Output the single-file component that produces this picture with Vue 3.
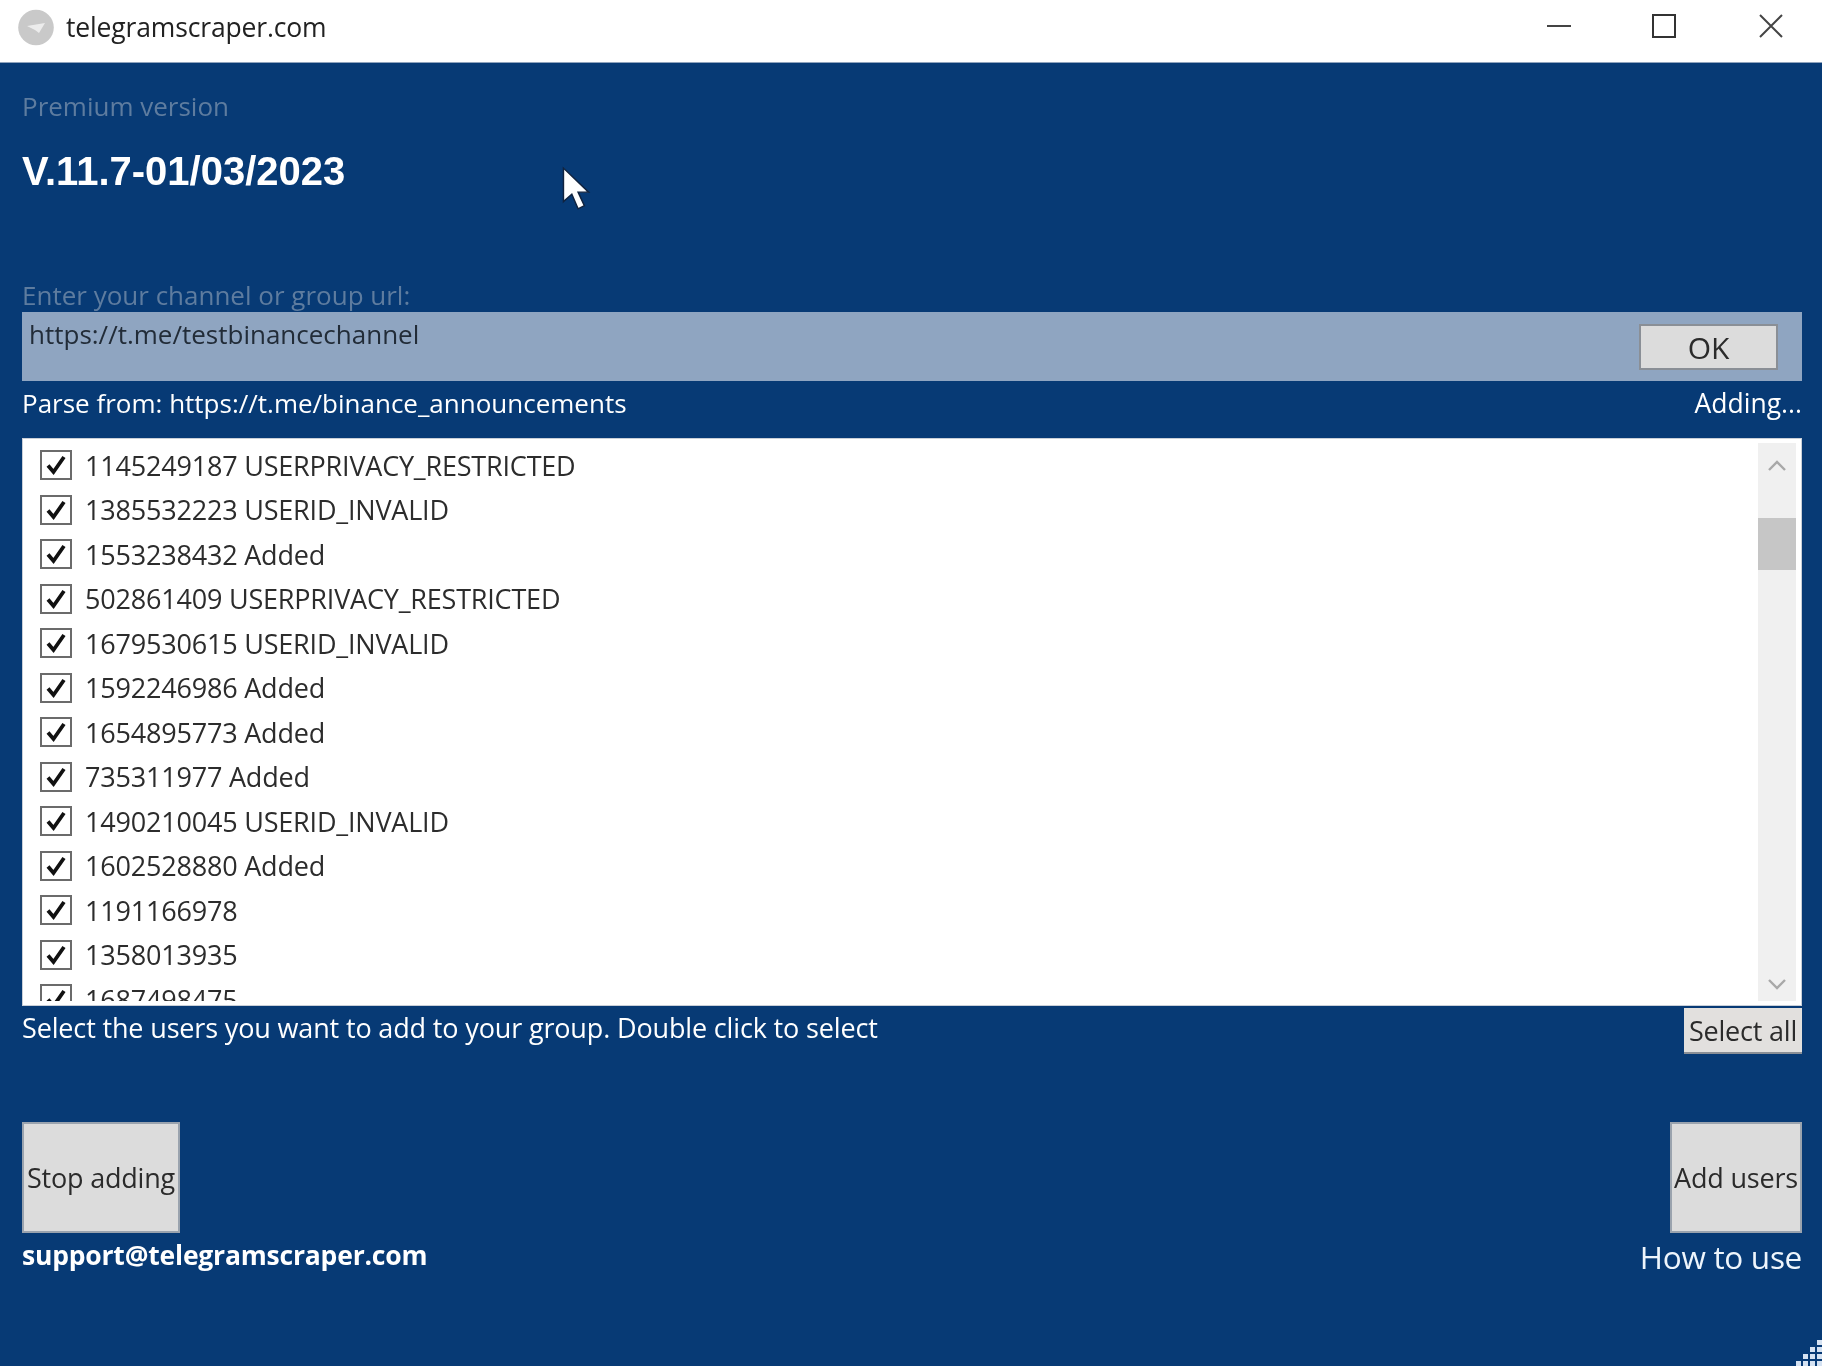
<script setup>
const rows = [
  '1145249187 USERPRIVACY_RESTRICTED',
  '1385532223 USERID_INVALID',
  '1553238432 Added',
  '502861409 USERPRIVACY_RESTRICTED',
  '1679530615 USERID_INVALID',
  '1592246986 Added',
  '1654895773 Added',
  '735311977 Added',
  '1490210045 USERID_INVALID',
  '1602528880 Added',
  '1191166978',
  '1358013935',
  '1687498475',
]
const grip = [[28,0],[28,7],[21,7],[28,14],[21,14],[14,14],[28,21],[21,21],[14,21],[7,21]]
</script>

<template>
  <div class="window">
    <header class="titlebar">
      <div class="title">
        <svg class="logo" width="36" height="37" viewBox="0 0 36 37">
          <circle cx="18" cy="18.5" r="17.8" fill="#c9c9c9" />
          <path d="M9 17 L27 14 L21 24 L17 21 Z" fill="#ececec" />
        </svg>
        <span>telegramscraper.com</span>
      </div>
      <div class="controls">
        <svg width="26" height="4" viewBox="0 0 26 4"><path d="M1 2H25" stroke="#444" stroke-width="2" /></svg>
        <svg class="max" width="26" height="26" viewBox="0 0 26 26"><rect x="2" y="2" width="22" height="22" fill="none" stroke="#333" stroke-width="2" /></svg>
        <svg width="26" height="26" viewBox="0 0 26 26"><path d="M2 2L24 24M24 2L2 24" stroke="#444" stroke-width="2" /></svg>
      </div>
    </header>

    <main class="body">
      <p class="muted premium">Premium version</p>
      <h1 class="version">V.11.7-01/03/2023</h1>
      <p class="muted enter">Enter your channel or group url:</p>

      <div class="urlbox">
        <span class="url">https://t.me/testbinancechannel</span>
        <button class="btn ok">OK</button>
      </div>

      <div class="status">
        <span>Parse from: https://t.me/binance_announcements</span>
        <span class="adding">Adding...</span>
      </div>

      <section class="listbox">
        <ul class="rows">
          <li v-for="row in rows" :key="row" class="row">
            <svg class="check" width="32" height="30" viewBox="0 0 32 30">
              <rect x="1" y="1" width="30" height="28" fill="#fff" stroke="#6b6b6b" stroke-width="2" />
              <path d="M8 15.5L13.5 22L24 7" fill="none" stroke="#111" stroke-width="3.8" />
            </svg>
            <span>{{ row }}</span>
          </li>
        </ul>
        <div class="scrollbar">
          <svg class="arrow" width="20" height="12" viewBox="0 0 20 12"><path d="M2 10L10 2L18 10" fill="none" stroke="#a8a8a8" stroke-width="2.4" /></svg>
          <div class="thumb"></div>
          <svg class="arrow down" width="20" height="12" viewBox="0 0 20 12"><path d="M2 2L10 10L18 2" fill="none" stroke="#a8a8a8" stroke-width="2.4" /></svg>
        </div>
      </section>

      <div class="hint">
        <span>Select the users you want to add to your group. Double click to select</span>
        <button class="btn selectall">Select all</button>
      </div>

      <div class="actions">
        <div class="col">
          <button class="btn big stop">Stop adding</button>
          <span class="support">support@telegramscraper.com</span>
        </div>
        <div class="col end">
          <button class="btn big add">Add users</button>
          <span class="howto">How to use</span>
        </div>
      </div>
    </main>

    <svg class="cursor" width="32" height="46" viewBox="0 0 30 44">
      <path d="M3 2V34L11 27L17 41L23 38L17 25H27Z" fill="#fff" stroke="#10233f" stroke-width="1.4" />
    </svg>
    <svg class="grip" width="32" height="26" viewBox="0 0 32 26">
      <rect v-for="p in grip" :key="p.join()" :x="p[0] - 1" :y="p[1]" width="5" height="5" fill="#d5e2f2" />
    </svg>
  </div>
</template>

<style>
html, body { margin: 0; background: #073a75; }
</style>

<style scoped>
.window {
  position: relative;
  width: 1822px;
  height: 1366px;
  overflow: hidden;
  background: #073a75;
  color: #fff;
  font-family: "Open Sans", "Noto Sans", sans-serif;
  font-size: 26px;
  filter: blur(0.7px);
}
p, h1, ul { margin: 0; padding: 0; }
.titlebar {
  height: 62px;
  background: #fff;
  display: flex;
  align-items: center;
  justify-content: space-between;
  color: #222;
  padding: 0 38px 0 18px;
  border-bottom: 1px solid #8fa3bd;
  box-sizing: content-box;
}
.title { display: flex; align-items: center; gap: 12px; font-size: 26.5px; letter-spacing: -0.15px; }
.logo { margin-top: -8px; }
.title span { margin-top: -8px; }
.controls { display: flex; align-items: center; gap: 81px; margin-top: -10px; }
.max { margin-left: -2px; }
.body { padding: 0 20px 0 22px; }
.muted { color: #5e7c9f; }
.premium { line-height: 32px; margin-top: 27px; }
.version { font-family: "Liberation Sans", sans-serif; font-weight: 700; font-size: 40px; line-height: 44px; margin-top: 27px; }
.enter { line-height: 32px; margin-top: 86px; }
.urlbox {
  height: 69px;
  margin-top: 1px;
  background: #8fa5c1;
  display: flex;
  justify-content: space-between;
  align-items: flex-start;
  padding: 0 24px 0 7px;
  color: #222c38;
}
.url { line-height: 44px; }
.btn {
  font-family: inherit;
  font-size: 27px;
  background: #dcdcdc;
  color: #2b2b2b;
  border: 2px solid #8a8f96;
  padding: 0;
  letter-spacing: -0.2px;
  white-space: nowrap;
}
.ok { width: 139px; height: 46px; margin-top: 12px; font-size: 30px; }
.status { display: flex; justify-content: space-between; line-height: 32px; margin-top: 6px; height: 51px; }
.adding { font-size: 26.5px; }
.listbox {
  height: 568px;
  background: #fff;
  border: 1px solid #c9cfd8;
  box-sizing: border-box;
  display: flex;
  justify-content: space-between;
  overflow: hidden;
  color: #2c2c2c;
}
.rows { list-style: none; height: 558px; overflow: hidden; padding-top: 4px; }
.row { display: flex; align-items: center; gap: 13px; height: 44.5px; padding-left: 17px; font-size: 27px; letter-spacing: -0.2px; }
.check { flex: none; }
.scrollbar {
  width: 38px;
  margin: 4px 5px 4px 0;
  background: #f0f0f0;
  display: flex;
  flex-direction: column;
  align-items: center;
}
.arrow { margin-top: 17px; }
.arrow.down { margin-top: auto; margin-bottom: 11px; }
.thumb { width: 38px; height: 52px; background: #c6c6c6; margin-top: 46px; }
.hint { display: flex; justify-content: space-between; align-items: flex-start; height: 116px; font-size: 27px; letter-spacing: -0.15px; }
.hint span { margin-top: 6px; line-height: 32px; }
.selectall { width: 118px; height: 46px; margin-top: 2px; border-width: 0 0 2px; background: #e2e0de; }
.actions { display: flex; justify-content: space-between; }
.col { display: flex; flex-direction: column; align-items: flex-start; }
.col.end { align-items: flex-end; }
.big { height: 111px; background: #dcdcdc; border-color: #9aa3ae; }
.stop { width: 158px; }
.add { width: 132px; }
.support { font-weight: 700; font-size: 26.5px; margin-top: 6px; line-height: 32px; letter-spacing: -0.2px; }
.howto { font-size: 31.5px; margin-top: 6px; line-height: 36px; letter-spacing: -0.3px; color: #eef5fc; }
.cursor { position: absolute; left: 560px; top: 166px; }
.grip { position: absolute; right: 0; bottom: 0; }
</style>
